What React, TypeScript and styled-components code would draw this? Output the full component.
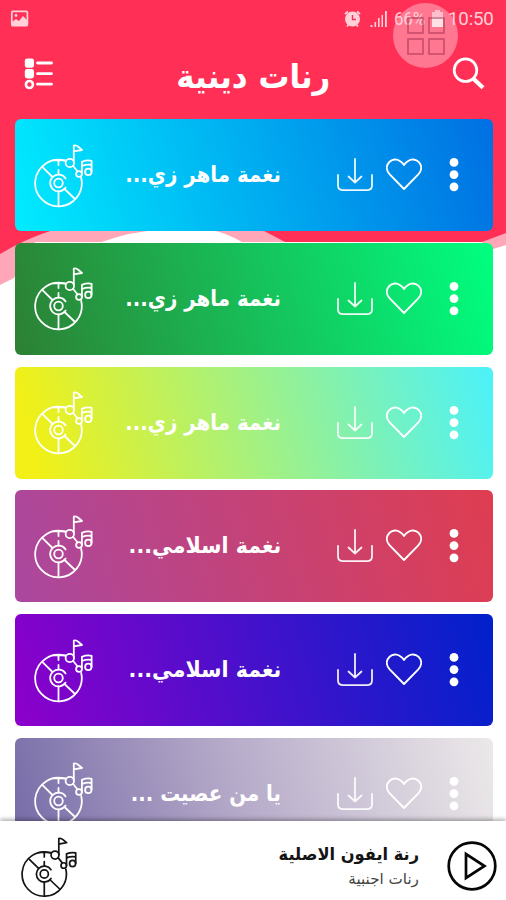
import React from "react";
import styled, { createGlobalStyle } from "styled-components";

const GlobalStyle = createGlobalStyle`
  * { box-sizing: border-box; }
  body { margin: 0; background: #fff; overflow: hidden; }
  button { border: 0; padding: 0; background: none; color: inherit; display: block; }
  svg { display: block; }
`;

const Screen = styled.main`
  position: relative;
  width: 506px;
  height: 900px;
  overflow: hidden;
  display: flex;
  flex-direction: column;
  background: #fff;
  color: #fff;
  font-family: "DejaVu Sans", sans-serif;
`;

const Backdrop = styled.svg`
  position: absolute;
  inset: 0 auto auto 0;
`;

const StatusBar = styled.div`
  position: relative;
  flex: none;
  height: 38px;
  padding: 0 11px 0 10px;
  display: flex;
  align-items: center;
  color: #ffd0d8;
  font: 400 18px/38px Roboto, sans-serif;
`;

const StatusIcons = styled.div`
  margin-left: auto;
  display: flex;
  align-items: center;
`;

const Signal = styled.svg`
  margin: 0 6px 0 8px;
`;

const StatusText = styled.span<{ $width: number }>`
  width: ${(p) => p.$width}px;
  white-space: nowrap;
  letter-spacing: -0.2px;
`;

const Battery = styled.svg`
  margin: 0 4px 0 3px;
`;

const AssistBubble = styled.div`
  position: absolute;
  left: 393px;
  top: 3px;
  width: 65px;
  height: 65px;
  border-radius: 50%;
  background: rgba(255, 205, 215, 0.46);
  display: grid;
  grid-template-columns: 17px 17px;
  grid-template-rows: 17px 17px;
  place-content: center;
  gap: 4px;
`;

const BubbleCell = styled.span`
  border: 2px solid rgba(165, 50, 80, 0.5);
  border-radius: 1px;
`;

const AppBar = styled.header`
  position: relative;
  flex: none;
  height: 81px;
  padding: 0 21px 9px 24px;
  display: flex;
  align-items: center;
  justify-content: space-between;
`;

const Fitted = styled.span<{ $scale: number; $origin: string }>`
  display: inline-block;
  transform: scaleX(${(p) => p.$scale});
  transform-origin: ${(p) => p.$origin} center;
`;

const Title = styled.h1`
  margin: 0;
  padding-top: 6px;
  font-size: 33px;
  line-height: 50px;
  font-weight: 700;
  direction: rtl;
`;

const List = styled.div`
  position: relative;
  flex: 1;
  min-height: 0;
  overflow: hidden;
  display: flex;
  flex-direction: column;
  gap: 11.8px;
  padding: 0 13.5px 0 14.5px;
`;

const Card = styled.article<{ $fill: string }>`
  flex: none;
  height: 112px;
  border-radius: 6px;
  background: linear-gradient(75deg, ${(p) => p.$fill});
  display: flex;
  align-items: center;
  padding: 0 34px 0 19.5px;
`;

const Artwork = styled.div`
  padding-top: 2px;
`;

const CardTitle = styled.h2`
  margin: 0 55.5px 0 0;
  flex: 1;
  font-size: 22px;
  line-height: 32px;
  font-weight: 700;
  direction: rtl;
  text-align: start;
  white-space: nowrap;
`;

const Actions = styled.div`
  display: flex;
  align-items: center;
`;

const Action = styled.button<{ $gap: number }>`
  margin-left: ${(p) => p.$gap}px;
`;

const Player = styled.footer`
  position: relative;
  flex: none;
  height: 79px;
  padding: 11px 8px 0 21px;
  display: flex;
  align-items: center;
  background: #fff;
  color: #141414;
  box-shadow: 0 -2px 4px rgba(0, 0, 0, 0.3);
`;

const PlayerArtwork = styled.div`
  padding-top: 3px;
`;

const Track = styled.div`
  margin-left: auto;
  margin-right: 27px;
  padding-top: 1px;
  direction: rtl;
`;

const TrackName = styled.div`
  font-size: 17px;
  line-height: 25px;
  font-weight: 700;
`;

const TrackGroup = styled.div`
  font-size: 15px;
  line-height: 24px;
  color: #444;
`;

const Disc = ({ size = 60 }: { size?: number }) => (
  <svg width={size} height={(size * 65) / 60} viewBox="0 0 60 65" fill="none" stroke="currentColor" strokeWidth="1.8" strokeLinecap="round" strokeLinejoin="round">
    <path d="M31 16.7 A23.3 23.3 0 1 0 47.2 34" />
    <path d="M19 16.3 H31.5" />
    <path d="M31.6 34.4 A8.4 8.4 0 1 0 31.6 43.6" />
    <circle cx="24.5" cy="39" r="4.3" />
    <path d="M24.5 17 V21 M24.5 26 V30.6 M24.5 47.5 V62 M8.5 23.2 L18.5 33 M30.5 45 L41 55" />
    <circle cx="35.8" cy="19" r="4.2" />
    <path d="M39.8 18.5 V1.6 Q42 .8 44.5 3 L48 6 L41 7.2 M39.2 22 L43.2 27" />
    <circle cx="45" cy="30" r="2.9" />
    <circle cx="54.3" cy="27.9" r="3.2" />
    <path d="M47.9 30 V17.8 Q53 15.8 57.6 16.8 V27.5 M48 22 Q53 20 57.5 21" />
  </svg>
);

const Download = () => (
  <svg width="36" height="34" viewBox="0 0 36 34" fill="none" stroke="currentColor" strokeWidth="1.8" strokeLinecap="round" strokeLinejoin="round" opacity=".92">
    <path d="M1 17 V27.5 Q1 32.2 6.3 32.2 H29.7 Q35 32.2 35 27.5 V17 M18 1 V24.5 M11.5 18.5 L18 24.5 L24.5 18.5" />
  </svg>
);

const Heart = () => (
  <svg width="36" height="34" viewBox="0 0 36 34" fill="none" stroke="currentColor" strokeWidth="1.9" strokeLinejoin="round">
    <path d="M18 7 C13.6.7 7.4 0 3.6 3.7 C-.5 7.8.4 12.8 3.7 16.4 L18 31 L32.3 16.4 C35.6 12.8 36.5 7.8 32.4 3.7 C28.6 0 22.4.7 18 7 Z" />
  </svg>
);

const Dots = () => (
  <svg width="10" height="34" viewBox="0 0 10 34" fill="currentColor">
    <circle cx="5" cy="4.4" r="4.4" />
    <circle cx="5" cy="16.6" r="4.4" />
    <circle cx="5" cy="28.8" r="4.4" />
  </svg>
);

const ringtones = [
  { title: "نغمة ماهر زي...", fill: "#00ecff, #006fe2", scale: 0.9 },
  { title: "نغمة ماهر زي...", fill: "#2d8033, #00ff80", scale: 0.9 },
  { title: "نغمة ماهر زي...", fill: "#f2f016 5%, #4bf2fa", scale: 0.9 },
  { title: "نغمة اسلامي...", fill: "#aa489f, #df3d50", scale: 0.935 },
  { title: "نغمة اسلامي...", fill: "#8d00cb, #0021cb", scale: 0.935 },
  { title: "يا من عصيت ...", fill: "#766ba7, #b4a8c8 45%, #ece9e9", scale: 0.9 },
];

export default function App() {
  return (
    <Screen>
      <GlobalStyle />
      <Backdrop width="506" height="300" viewBox="0 0 506 300">
        <path d="M0 0 H506 V245 L493 249 L482 242 H35 L14 278 L0 285 Z" fill="#ffa6b9" />
        <path d="M0 0 H506 V233 L482 242 H285 Q272 235 262 230 L53 230 Q25 239 0 254 Z" fill="#ff2f56" />
        <path d="M25 242 Q90 218 155 218 Q220 218 285 242 Z" fill="#ffa6b9" />
        <path d="M100 242.5 Q132 231 160 230 H210 Q225 232 243 242.5 Z" fill="#fff" />
      </Backdrop>

      <StatusBar>
        <svg width="19" height="18" viewBox="0 0 19 18" fill="none" stroke="currentColor" strokeWidth="1.7">
          <rect x="1.8" y="1.4" width="15.6" height="14.2" rx="1" />
          <circle cx="6" cy="5.5" r="1.4" fill="currentColor" stroke="none" />
          <path d="M2 12 L6 9 L9 11 L13 6 L17 10 V15 H2 Z" fill="currentColor" stroke="none" />
        </svg>
        <StatusIcons>
          <svg width="17" height="18" viewBox="0 0 17 18" fill="none" stroke="currentColor" strokeWidth="1.8">
            <circle cx="8.5" cy="9" r="6.6" fill="currentColor" />
            <path d="M1 4 L4 1.5 M16 4 L13 1.5 M3 16.5 L5 14 M14 16.5 L12 14" />
            <path d="M8.5 5 V9.5 H12" stroke="#ff2f56" strokeWidth="1.4" />
          </svg>
          <Signal width="19" height="18" viewBox="0 0 19 18" fill="currentColor">
            <path d="M1.5 15h2v2h-2z M5.5 12h1.6v5h-1.6z M9 8h1.6v9h-1.6z M12.5 5h1.5v12h-1.5z M16 1h1.8v16h-1.8z" />
          </Signal>
          <StatusText $width={34}><Fitted $scale={0.94} $origin="left">66%</Fitted></StatusText>
          <Battery width="13" height="18" viewBox="0 0 13 18">
            <path d="M4 0h5v2h3v15H1V2h3z" fill="#ffb2c2" />
            <path d="M1 7h11v10H1z" fill="#fff0f2" />
          </Battery>
          <StatusText $width={47}><Fitted $scale={1.04} $origin="left">10:50</Fitted></StatusText>
        </StatusIcons>
        <AssistBubble>
          <BubbleCell /><BubbleCell /><BubbleCell /><BubbleCell />
        </AssistBubble>
      </StatusBar>

      <AppBar>
        <button aria-label="القائمة">
          <svg width="30" height="32" viewBox="0 0 30 32">
            <rect x=".8" y=".4" width="9.2" height="9.4" rx="2.4" fill="#fff" />
            <rect x=".8" y="11" width="9.2" height="9.4" rx="2.4" fill="#fff" />
            <circle cx="5.4" cy="26.5" r="3.5" fill="none" stroke="#fff" strokeWidth="2.6" />
            <path d="M13.5 5h14 M13.5 15.7h14 M13.5 26.2h14" stroke="#fff" strokeWidth="2.8" strokeLinecap="round" />
          </svg>
        </button>
        <Title><Fitted $scale={0.935} $origin="center">رنات دينية</Fitted></Title>
        <button aria-label="بحث">
          <svg width="33" height="34" viewBox="0 0 33 34" fill="none" stroke="#fff">
            <circle cx="13.5" cy="13.2" r="11.3" strokeWidth="2.7" />
            <path d="M21.2 21.5 L31 30.8" strokeWidth="4.2" />
          </svg>
        </button>
      </AppBar>

      <List>
        {ringtones.map((tone, i) => (
          <Card key={i} $fill={tone.fill}>
            <Artwork><Disc /></Artwork>
            <CardTitle><Fitted $scale={tone.scale} $origin="right">{tone.title}</Fitted></CardTitle>
            <Actions>
              <Action $gap={0} aria-label="تحميل"><Download /></Action>
              <Action $gap={13.5} aria-label="مفضلة"><Heart /></Action>
              <Action $gap={26.5} aria-label="المزيد"><Dots /></Action>
            </Actions>
          </Card>
        ))}
      </List>

      <Player>
        <PlayerArtwork><Disc size={57} /></PlayerArtwork>
        <Track>
          <TrackName><Fitted $scale={0.955} $origin="right">رنة ايفون الاصلية</Fitted></TrackName>
          <TrackGroup><Fitted $scale={1.01} $origin="right">رنات اجنبية</Fitted></TrackGroup>
        </Track>
        <button aria-label="تشغيل">
          <svg width="52" height="52" viewBox="0 0 52 52" fill="none" stroke="#050505" strokeWidth="2.7">
            <circle cx="26" cy="26" r="23.3" />
            <path d="M20 14 V38 L38.5 26 Z" />
          </svg>
        </button>
      </Player>
    </Screen>
  );
}
